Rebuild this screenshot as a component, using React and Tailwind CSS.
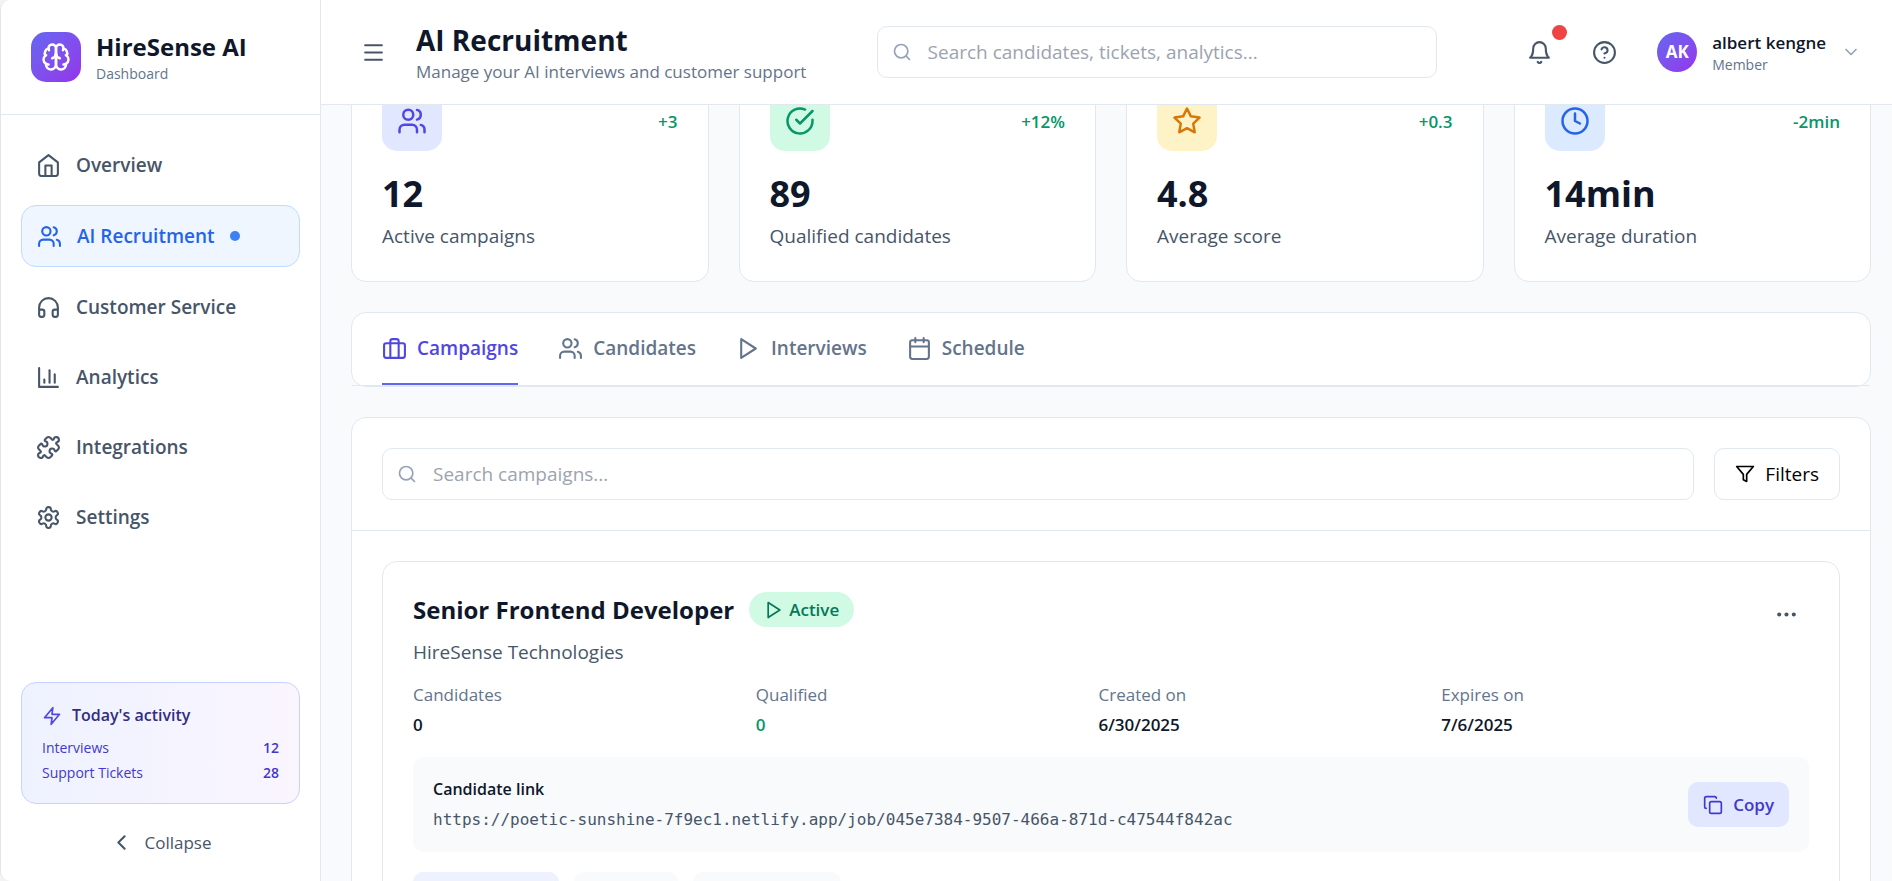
import { useState } from 'react';
import {
	Calendar,
	ChevronDown,
	ChevronLeft,
	CircleHelp,
	Clock,
	Copy,
	Ellipsis,
	Menu,
	Puzzle,
} from 'lucide-react';

const Icon = ({ className, children }) => (
	<svg
		viewBox="0 0 24 24"
		fill="none"
		stroke="currentColor"
		strokeWidth="2"
		strokeLinecap="round"
		strokeLinejoin="round"
		aria-hidden="true"
		className={className}>
		{children}
	</svg>
);

const BrainIcon = ({ className }) => (
	<Icon className={className}>
		<path d="M12 5a3 3 0 1 0-5.997.125 4 4 0 0 0-2.526 5.77 4 4 0 0 0 .556 6.588A4 4 0 1 0 12 18Z" />
		<path d="M12 5a3 3 0 1 1 5.997.125 4 4 0 0 1 2.526 5.77 4 4 0 0 1-.556 6.588A4 4 0 1 1 12 18Z" />
		<path d="M15 13a4.5 4.5 0 0 1-3-4 4.5 4.5 0 0 1-3 4" />
		<path d="M17.599 6.5a3 3 0 0 0 .399-1.375" />
		<path d="M6.003 5.125A3 3 0 0 0 6.401 6.5" />
		<path d="M3.477 10.896a4 4 0 0 1 .585-.396" />
		<path d="M19.938 10.5a4 4 0 0 1 .585.396" />
		<path d="M6 18a4 4 0 0 1-1.967-.516" />
		<path d="M19.967 17.484A4 4 0 0 1 18 18" />
	</Icon>
);

const HomeIcon = ({ className }) => (
	<Icon className={className}>
		<path d="m3 9 9-7 9 7v11a2 2 0 0 1-2 2H5a2 2 0 0 1-2-2z" />
		<polyline points="9 22 9 12 15 12 15 22" />
	</Icon>
);

const UsersIcon = ({ className }) => (
	<Icon className={className}>
		<path d="M16 21v-2a4 4 0 0 0-4-4H6a4 4 0 0 0-4 4v2" />
		<circle cx="9" cy="7" r="4" />
		<path d="M22 21v-2a4 4 0 0 0-3-3.87" />
		<path d="M16 3.13a4 4 0 0 1 0 7.75" />
	</Icon>
);

const HeadphonesIcon = ({ className }) => (
	<Icon className={className}>
		<path d="M3 14h3a2 2 0 0 1 2 2v3a2 2 0 0 1-2 2H5a2 2 0 0 1-2-2v-7a9 9 0 0 1 18 0v7a2 2 0 0 1-2 2h-1a2 2 0 0 1-2-2v-3a2 2 0 0 1 2-2h3" />
	</Icon>
);

const ChartIcon = ({ className }) => (
	<Icon className={className}>
		<path d="M3 3v18h18" />
		<path d="M18 17V9" />
		<path d="M13 17V5" />
		<path d="M8 17v-3" />
	</Icon>
);

const SettingsIcon = ({ className }) => (
	<Icon className={className}>
		<path d="M12.22 2h-.44a2 2 0 0 0-2 2v.18a2 2 0 0 1-1 1.73l-.43.25a2 2 0 0 1-2 0l-.15-.08a2 2 0 0 0-2.73.73l-.22.38a2 2 0 0 0 .73 2.73l.15.1a2 2 0 0 1 1 1.72v.51a2 2 0 0 1-1 1.74l-.15.09a2 2 0 0 0-.73 2.73l.22.38a2 2 0 0 0 2.73.73l.15-.08a2 2 0 0 1 2 0l.43.25a2 2 0 0 1 1 1.73V20a2 2 0 0 0 2 2h.44a2 2 0 0 0 2-2v-.18a2 2 0 0 1 1-1.73l.43-.25a2 2 0 0 1 2 0l.15.08a2 2 0 0 0 2.73-.73l.22-.39a2 2 0 0 0-.73-2.73l-.15-.08a2 2 0 0 1-1-1.74v-.5a2 2 0 0 1 1-1.74l.15-.09a2 2 0 0 0 .73-2.73l-.22-.38a2 2 0 0 0-2.73-.73l-.15.08a2 2 0 0 1-2 0l-.43-.25a2 2 0 0 1-1-1.73V4a2 2 0 0 0-2-2z" />
		<circle cx="12" cy="12" r="3" />
	</Icon>
);

const ZapIcon = ({ className }) => (
	<Icon className={className}>
		<polygon points="13 2 3 14 12 14 11 22 21 10 12 10 13 2" />
	</Icon>
);

const BellIcon = ({ className }) => (
	<Icon className={className}>
		<path d="M6 8a6 6 0 0 1 12 0c0 7 3 9 3 9H3s3-2 3-9" />
		<path d="M10.3 21a1.94 1.94 0 0 0 3.4 0" />
	</Icon>
);

const SearchIcon = ({ className }) => (
	<Icon className={className}>
		<circle cx="11" cy="11" r="8" />
		<path d="m21 21-4.3-4.3" />
	</Icon>
);

const CheckIcon = ({ className }) => (
	<Icon className={className}>
		<path d="M22 11.08V12a10 10 0 1 1-5.93-9.14" />
		<path d="m9 11 3 3L22 4" />
	</Icon>
);

const StarIcon = ({ className }) => (
	<Icon className={className}>
		<polygon points="12 2 15.09 8.26 22 9.27 17 14.14 18.18 21.02 12 17.77 5.82 21.02 7 14.14 2 9.27 8.91 8.26 12 2" />
	</Icon>
);

const BriefcaseIcon = ({ className }) => (
	<Icon className={className}>
		<rect width="20" height="14" x="2" y="7" rx="2" ry="2" />
		<path d="M16 21V5a2 2 0 0 0-2-2h-4a2 2 0 0 0-2 2v16" />
	</Icon>
);

const PlayIcon = ({ className }) => (
	<Icon className={className}>
		<polygon points="5 3 19 12 5 21 5 3" />
	</Icon>
);

const FilterIcon = ({ className }) => (
	<Icon className={className}>
		<polygon points="22 3 2 3 10 12.46 10 19 14 21 14 12.46 22 3" />
	</Icon>
);

const navItems = [
	{ id: 'overview', label: 'Overview', icon: HomeIcon },
	{ id: 'recruitment', label: 'AI Recruitment', icon: UsersIcon },
	{ id: 'service', label: 'Customer Service', icon: HeadphonesIcon },
	{ id: 'analytics', label: 'Analytics', icon: ChartIcon },
	{ id: 'integrations', label: 'Integrations', icon: Puzzle },
	{ id: 'settings', label: 'Settings', icon: SettingsIcon },
];

const stats = [
	{
		label: 'Active campaigns',
		value: '12',
		change: '+3',
		icon: UsersIcon,
		color: 'bg-[#e0e7ff] text-[#4f46e5]',
	},
	{
		label: 'Qualified candidates',
		value: '89',
		change: '+12%',
		icon: CheckIcon,
		color: 'bg-[#d1fae5] text-[#059669]',
	},
	{
		label: 'Average score',
		value: '4.8',
		change: '+0.3',
		icon: StarIcon,
		color: 'bg-[#fef3c7] text-[#d97706]',
	},
	{
		label: 'Average duration',
		value: '14min',
		change: '-2min',
		icon: Clock,
		color: 'bg-[#dbeafe] text-[#2563eb]',
	},
];

const tabs = [
	{ id: 'campaigns', label: 'Campaigns', icon: BriefcaseIcon },
	{ id: 'candidates', label: 'Candidates', icon: UsersIcon },
	{ id: 'interviews', label: 'Interviews', icon: PlayIcon },
	{ id: 'schedule', label: 'Schedule', icon: Calendar },
];

const campaign = {
	title: 'Senior Frontend Developer',
	company: 'HireSense Technologies',
	link: 'https://poetic-sunshine-7f9ec1.netlify.app/job/045e7384-9507-466a-871d-c47544f842ac',
	details: [
		{ label: 'Candidates', value: '0', color: 'text-[#0f172a]' },
		{ label: 'Qualified', value: '0', color: 'text-[#059669]' },
		{ label: 'Created on', value: '6/30/2025', color: 'text-[#0f172a]' },
		{ label: 'Expires on', value: '7/6/2025', color: 'text-[#0f172a]' },
	],
};

const Sidebar = ({ active, onSelect }) => (
	<aside className="w-80 shrink-0 flex flex-col bg-white border-r border-[#e2e8f0]">
		<div className="flex items-center gap-[15px] p-[30px] border-b border-[#e2e8f0]">
			<div className="size-[50px] rounded-[15px] bg-linear-to-br from-[#6366f1] to-[#9333ea] flex items-center justify-center text-white">
				<BrainIcon className="size-[30px]" />
			</div>
			<div>
				<h1 className="text-[24px] leading-[34px] font-bold text-[#0f172a]">
					HireSense AI
				</h1>
				<p className="text-[14px] leading-5 text-[#64748b]">Dashboard</p>
			</div>
		</div>

		<nav className="flex-1 flex flex-col gap-[10px] p-5">
			{navItems.map(({ id, label, icon: NavIcon }) => (
				<button
					key={id}
					onClick={() => onSelect(id)}
					className={`flex items-center gap-[15px] p-[15px] rounded-[15px] text-[19px] leading-[30px] font-semibold ${
						active === id
							? 'bg-[#eff6ff] text-[#2563eb] border border-[#bfdbfe]'
							: 'text-[#475569]'
					}`}>
					<NavIcon className="size-[25px]" />
					<span>{label}</span>
					{active === id && (
						<span className="size-[10px] rounded-full bg-[#3b82f6]" />
					)}
				</button>
			))}
		</nav>

		<div className="flex flex-col gap-5 p-5">
			<div className="p-5 rounded-[15px] border border-[#c7d2fe] bg-linear-to-r from-[#eef2ff] to-[#faf5ff]">
				<div className="flex items-center gap-[10px] mb-[10px]">
					<ZapIcon className="size-5 text-[#4f46e5]" />
					<span className="text-[16px] leading-[25px] font-semibold text-[#312e81]">
						Today's activity
					</span>
				</div>
				<div className="flex flex-col gap-[5px] text-[14px] leading-5 text-[#4338ca]">
					<div className="flex justify-between">
						<span>Interviews</span>
						<span className="font-semibold">12</span>
					</div>
					<div className="flex justify-between">
						<span>Support Tickets</span>
						<span className="font-semibold">28</span>
					</div>
				</div>
			</div>
			<button className="flex items-center justify-center gap-[10px] py-[6px] text-[17px] leading-[25px] text-[#475569]">
				<ChevronLeft className="size-[25px]" />
				Collapse
			</button>
		</div>
	</aside>
);

const Header = () => (
	<header className="relative z-10 flex items-center justify-between pl-[30px] pr-[21px] py-5 bg-white border-b border-[#e2e8f0]">
		<div className="flex items-center gap-5">
			<button aria-label="Toggle menu" className="p-[10px] text-[#475569]">
				<Menu className="size-[25px]" />
			</button>
			<div className="w-[380px] whitespace-nowrap">
				<h2 className="text-[28px] leading-10 font-bold text-[#0f172a]">
					AI Recruitment
				</h2>
				<p className="text-[17px] leading-6 text-[#64748b]">
					Manage your AI interviews and customer support
				</p>
			</div>
		</div>

		<label className="flex items-center gap-4 w-[560px] h-[52px] px-[14px] rounded-[10px] border border-[#e2e8f0]">
			<SearchIcon className="size-5 text-[#94a3b8]" />
			<input
				type="text"
				aria-label="Search"
				placeholder="Search candidates, tickets, analytics..."
				className="flex-1 text-[19px] leading-[30px] outline-none placeholder:text-[#9ca3af]"
			/>
		</label>

		<div className="flex items-center gap-5">
			<button
				aria-label="Notifications"
				className="relative p-[10px] text-[#475569]">
				<BellIcon className="size-[25px]" />
				<span className="absolute -top-[5px] -right-[5px] size-[15px] rounded-full bg-[#ef4444]" />
			</button>
			<button aria-label="Help" className="p-[10px] text-[#475569]">
				<CircleHelp className="size-[25px]" />
			</button>
			<button className="flex items-center gap-[15px] px-[10px] text-left">
				<span className="size-10 rounded-full bg-linear-to-br from-[#6366f1] to-[#9333ea] flex items-center justify-center text-[17px] font-bold text-white">
					AK
				</span>
				<span>
					<span className="block text-[17px] leading-[25px] font-semibold text-[#0f172a]">
						albert kengne
					</span>
					<span className="block text-[14px] leading-5 text-[#64748b]">
						Member
					</span>
				</span>
				<ChevronDown className="size-5 text-[#94a3b8]" />
			</button>
		</div>
	</header>
);

const StatCard = ({ stat }) => {
	const StatIcon = stat.icon;
	return (
		<div className="bg-white rounded-[15px] border border-[#e2e8f0] p-[30px]">
			<div className="flex items-center justify-between mb-5">
				<div
					className={`size-[60px] rounded-[15px] flex items-center justify-center ${stat.color}`}>
					<StatIcon className="size-[30px]" />
				</div>
				<span className="text-[17px] leading-[25px] font-semibold text-[#059669]">
					{stat.change}
				</span>
			</div>
			<p className="text-[36px] leading-[45px] font-bold text-[#0f172a] mb-[5px]">
				{stat.value}
			</p>
			<p className="text-[19px] leading-[30px] text-[#475569]">{stat.label}</p>
		</div>
	);
};

const CampaignCard = () => (
	<div className="rounded-[15px] border border-[#e2e8f0] p-[30px]">
		<div className="flex items-start mb-5">
			<div className="flex-1">
				<div className="flex items-center gap-[15px] mb-[10px]">
					<h3 className="text-[24px] leading-[35px] font-bold text-[#0f172a]">
						{campaign.title}
					</h3>
					<span className="flex items-center gap-[5px] px-[15px] py-[5px] rounded-full bg-[#d1fae5] text-[17px] leading-[25px] font-semibold text-[#047857]">
						<PlayIcon className="size-5" />
						Active
					</span>
				</div>
				<p className="text-[19px] leading-[30px] text-[#475569] mb-[15px]">
					{campaign.company}
				</p>
				<dl className="grid grid-cols-4 gap-5 text-[17px] leading-[25px]">
					{campaign.details.map(({ label, value, color }) => (
						<div key={label} className="flex flex-col gap-[5px]">
							<dt className="text-[#64748b]">{label}</dt>
							<dd className={`font-semibold ${color}`}>{value}</dd>
						</div>
					))}
				</dl>
			</div>
			<button aria-label="More actions" className="p-[10px] text-[#475569]">
				<Ellipsis className="size-[25px]" />
			</button>
		</div>

		<div className="flex items-center justify-between p-5 mb-5 rounded-[10px] bg-[#f8fafc]">
			<div className="flex flex-col gap-[5px] text-[16px] leading-[25px]">
				<p className="font-semibold text-[#0f172a]">Candidate link</p>
				<a
					href={campaign.link}
					className="font-['DejaVu_Sans_Mono',monospace] text-[#475569]">
					{campaign.link}
				</a>
			</div>
			<button className="flex items-center gap-[10px] px-[15px] py-[10px] rounded-[10px] bg-[#e0e7ff] text-[17px] leading-[25px] font-semibold text-[#4338ca]">
				<Copy className="size-5" />
				Copy
			</button>
		</div>

		<div className="flex gap-[15px]">
			<button
				aria-label="View candidates"
				className="w-[146px] h-[45px] rounded-[10px] bg-[#eef2ff]"
			/>
			<button
				aria-label="Edit campaign"
				className="w-[104px] h-[45px] rounded-[10px] bg-[#f8fafc]"
			/>
			<button
				aria-label="Campaign statistics"
				className="w-[148px] h-[45px] rounded-[10px] bg-[#f8fafc]"
			/>
		</div>
	</div>
);

const App = () => {
	const [section, setSection] = useState('recruitment');
	const [tab, setTab] = useState('campaigns');

	return (
		<div className="h-screen bg-[#f3f3f3] font-['Open_Sans',sans-serif]">
			<div className="flex h-full overflow-hidden rounded-l-[10px] border-l border-[#e5e5e5] bg-[#f8fafc]">
				<Sidebar active={section} onSelect={setSection} />

				<div className="flex-1 min-w-0 flex flex-col">
					<Header />

					<main className="flex-1 min-h-0 overflow-hidden">
						{/* scrolled down a little, the stat cards slide under the header */}
						<div className="-mt-[45px] flex flex-col gap-[30px] pl-[30px] pr-[21px] pb-[30px]">
							<div className="grid grid-cols-4 gap-[30px]">
								{stats.map((stat) => (
									<StatCard key={stat.label} stat={stat} />
								))}
							</div>

							<div className="bg-white rounded-[15px] border border-[#e2e8f0]">
								<div className="flex gap-10 px-[30px] border-b border-[#e2e8f0]">
									{tabs.map(({ id, label, icon: TabIcon }) => (
										<button
											key={id}
											onClick={() => setTab(id)}
											className={`flex items-center gap-[10px] py-5 border-b-2 text-[19px] leading-[30px] font-semibold ${
												tab === id
													? 'border-[#6366f1] text-[#4f46e5]'
													: 'border-transparent text-[#64748b]'
											}`}>
											<TabIcon className="size-[25px]" />
											{label}
										</button>
									))}
								</div>
							</div>

							<div className="bg-white rounded-[15px] border border-[#e2e8f0]">
								<div className="flex gap-5 p-[30px] border-b border-[#e2e8f0]">
									<label className="flex-1 flex items-center gap-4 h-[52px] px-[14px] rounded-[10px] border border-[#e2e8f0]">
										<SearchIcon className="size-5 text-[#94a3b8]" />
										<input
											type="text"
											aria-label="Search campaigns"
											placeholder="Search campaigns..."
											className="flex-1 text-[19px] leading-[30px] outline-none placeholder:text-[#9ca3af]"
										/>
									</label>
									<button className="flex items-center gap-[10px] px-5 rounded-[10px] border border-[#e2e8f0] text-[19px] leading-[30px] text-black">
										<FilterIcon className="size-5" />
										Filters
									</button>
								</div>
								<div className="p-[30px]">
									<CampaignCard />
								</div>
							</div>
						</div>
					</main>
				</div>
			</div>
		</div>
	);
};

export default App;
